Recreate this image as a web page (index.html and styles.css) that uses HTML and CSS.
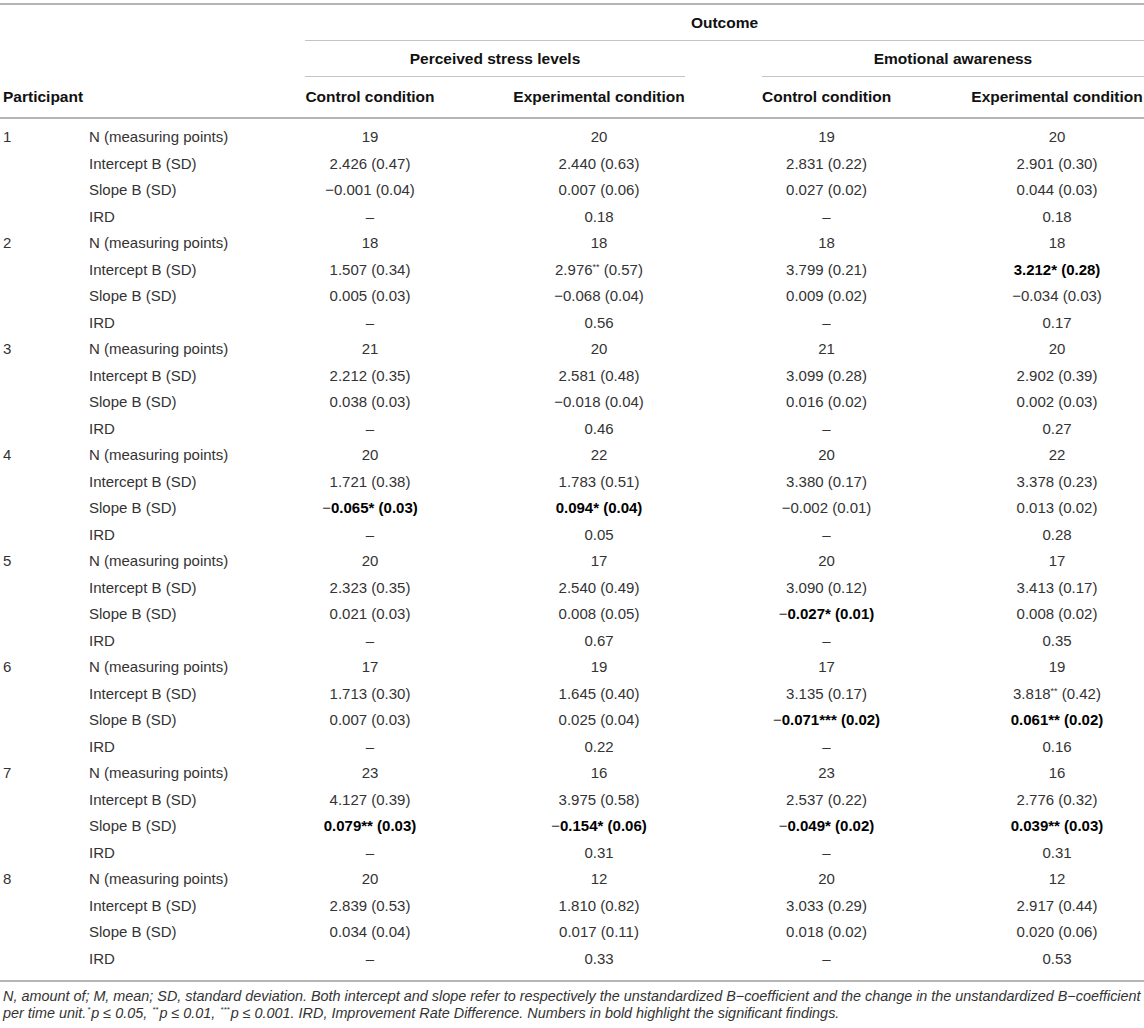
FILE: index.html
```html
<!DOCTYPE html>
<html>
    <head>
        <meta charset="utf-8">
        <title>Multilevel results per participant</title>
        <link rel="stylesheet" href="styles.css">
    </head>
    <body>
        <div class="page">
            <table class="results">
                <colgroup>
                    <col class="w-part">
                    <col class="w-label">
                    <col class="w-c1">
                    <col class="w-c2">
                    <col class="w-c3">
                    <col class="w-c4">
                </colgroup>
                <thead>
                    <tr>
                        <th colspan="2"></th>
                        <th colspan="4"><div class="rule">Outcome</div></th>
                    </tr>
                    <tr>
                        <th colspan="2"></th>
                        <th colspan="2" class="group-left"><div class="rule">Perceived stress levels</div></th>
                        <th colspan="2"><div class="rule">Emotional awareness</div></th>
                    </tr>
                    <tr class="cols">
                        <th colspan="2" class="part">Participant</th>
                        <th class="c1">Control condition</th>
                        <th class="c2">Experimental condition</th>
                        <th class="c3">Control condition</th>
                        <th class="c4">Experimental condition</th>
                    </tr>
                </thead>
                <tbody>
                    <tr><td>1</td><td>N (measuring points)</td><td>19</td><td>20</td><td>19</td><td>20</td></tr>
                    <tr><td></td><td>Intercept B (SD)</td><td>2.426 (0.47)</td><td>2.440 (0.63)</td><td>2.831 (0.22)</td><td>2.901 (0.30)</td></tr>
                    <tr><td></td><td>Slope B (SD)</td><td>−0.001 (0.04)</td><td>0.007 (0.06)</td><td>0.027 (0.02)</td><td>0.044 (0.03)</td></tr>
                    <tr><td></td><td>IRD</td><td>–</td><td>0.18</td><td>–</td><td>0.18</td></tr>

                    <tr><td>2</td><td>N (measuring points)</td><td>18</td><td>18</td><td>18</td><td>18</td></tr>
                    <tr><td></td><td>Intercept B (SD)</td><td>1.507 (0.34)</td><td>2.976<sup>**</sup> (0.57)</td><td>3.799 (0.21)</td><td><b>3.212* (0.28)</b></td></tr>
                    <tr><td></td><td>Slope B (SD)</td><td>0.005 (0.03)</td><td>−0.068 (0.04)</td><td>0.009 (0.02)</td><td>−0.034 (0.03)</td></tr>
                    <tr><td></td><td>IRD</td><td>–</td><td>0.56</td><td>–</td><td>0.17</td></tr>

                    <tr><td>3</td><td>N (measuring points)</td><td>21</td><td>20</td><td>21</td><td>20</td></tr>
                    <tr><td></td><td>Intercept B (SD)</td><td>2.212 (0.35)</td><td>2.581 (0.48)</td><td>3.099 (0.28)</td><td>2.902 (0.39)</td></tr>
                    <tr><td></td><td>Slope B (SD)</td><td>0.038 (0.03)</td><td>−0.018 (0.04)</td><td>0.016 (0.02)</td><td>0.002 (0.03)</td></tr>
                    <tr><td></td><td>IRD</td><td>–</td><td>0.46</td><td>–</td><td>0.27</td></tr>

                    <tr><td>4</td><td>N (measuring points)</td><td>20</td><td>22</td><td>20</td><td>22</td></tr>
                    <tr><td></td><td>Intercept B (SD)</td><td>1.721 (0.38)</td><td>1.783 (0.51)</td><td>3.380 (0.17)</td><td>3.378 (0.23)</td></tr>
                    <tr><td></td><td>Slope B (SD)</td><td>−<b>0.065* (0.03)</b></td><td><b>0.094* (0.04)</b></td><td>−0.002 (0.01)</td><td>0.013 (0.02)</td></tr>
                    <tr><td></td><td>IRD</td><td>–</td><td>0.05</td><td>–</td><td>0.28</td></tr>

                    <tr><td>5</td><td>N (measuring points)</td><td>20</td><td>17</td><td>20</td><td>17</td></tr>
                    <tr><td></td><td>Intercept B (SD)</td><td>2.323 (0.35)</td><td>2.540 (0.49)</td><td>3.090 (0.12)</td><td>3.413 (0.17)</td></tr>
                    <tr><td></td><td>Slope B (SD)</td><td>0.021 (0.03)</td><td>0.008 (0.05)</td><td>−<b>0.027* (0.01)</b></td><td>0.008 (0.02)</td></tr>
                    <tr><td></td><td>IRD</td><td>–</td><td>0.67</td><td>–</td><td>0.35</td></tr>

                    <tr><td>6</td><td>N (measuring points)</td><td>17</td><td>19</td><td>17</td><td>19</td></tr>
                    <tr><td></td><td>Intercept B (SD)</td><td>1.713 (0.30)</td><td>1.645 (0.40)</td><td>3.135 (0.17)</td><td>3.818<sup>**</sup> (0.42)</td></tr>
                    <tr><td></td><td>Slope B (SD)</td><td>0.007 (0.03)</td><td>0.025 (0.04)</td><td>−<b>0.071*** (0.02)</b></td><td><b>0.061** (0.02)</b></td></tr>
                    <tr><td></td><td>IRD</td><td>–</td><td>0.22</td><td>–</td><td>0.16</td></tr>

                    <tr><td>7</td><td>N (measuring points)</td><td>23</td><td>16</td><td>23</td><td>16</td></tr>
                    <tr><td></td><td>Intercept B (SD)</td><td>4.127 (0.39)</td><td>3.975 (0.58)</td><td>2.537 (0.22)</td><td>2.776 (0.32)</td></tr>
                    <tr><td></td><td>Slope B (SD)</td><td><b>0.079** (0.03)</b></td><td>−<b>0.154* (0.06)</b></td><td>−<b>0.049* (0.02)</b></td><td><b>0.039** (0.03)</b></td></tr>
                    <tr><td></td><td>IRD</td><td>–</td><td>0.31</td><td>–</td><td>0.31</td></tr>

                    <tr><td>8</td><td>N (measuring points)</td><td>20</td><td>12</td><td>20</td><td>12</td></tr>
                    <tr><td></td><td>Intercept B (SD)</td><td>2.839 (0.53)</td><td>1.810 (0.82)</td><td>3.033 (0.29)</td><td>2.917 (0.44)</td></tr>
                    <tr><td></td><td>Slope B (SD)</td><td>0.034 (0.04)</td><td>0.017 (0.11)</td><td>0.018 (0.02)</td><td>0.020 (0.06)</td></tr>
                    <tr><td></td><td>IRD</td><td>–</td><td>0.33</td><td>–</td><td>0.53</td></tr>
                </tbody>
            </table>
            <p class="note">N, amount of; M, mean; SD, standard deviation. Both intercept and slope refer to respectively the unstandardized B−coefficient and the change in the unstandardized B−coefficient<br>per time unit.<sup>*</sup>p ≤ 0.05, <sup>**</sup>p ≤ 0.01, <sup>***</sup>p ≤ 0.001. IRD, Improvement Rate Difference. Numbers in bold highlight the significant findings.</p>
        </div>
    </body>
</html>
```

FILE: styles.css
```css
body {
    margin: 0;
    background: #fff;
    color: #333;
    font-family: "Liberation Sans", Arial, sans-serif;
}

.page {
    padding-top: 3px;
}

.results {
    width: 1144px;
    table-layout: fixed;
    border-collapse: separate;
    border-spacing: 0;
    border-top: 2px solid #b5b5b5;
    border-bottom: 2px solid #b5b5b5;
}

.w-part  { width: 89px; }
.w-label { width: 216px; }
.w-c1    { width: 208px; }
.w-c2    { width: 249px; }
.w-c3    { width: 208px; }
.w-c4    { width: 174px; }

.results th {
    padding: 0;
    font-size: 15.5px;
    font-weight: bold;
    color: #111;
    text-align: center;
    white-space: nowrap;
}

.rule {
    height: 35px;
    line-height: 35px;
    border-bottom: 1px solid #c4c4c4;
}

.results th.group-left {
    padding-right: 77px;
}

.cols th {
    height: 40px;
    border-bottom: 2px solid #b5b5b5;
}

.cols th.part {
    text-align: left;
    padding-left: 3px;
}

.results td {
    padding: 0;
    font-size: 15px;
    line-height: 26.5px;
    text-align: center;
    white-space: nowrap;
}

.results td:nth-child(1) {
    text-align: left;
    padding-left: 3px;
}

.results td:nth-child(2) {
    text-align: left;
}

.results .c1, .results td:nth-child(3) { padding-right: 78px; }
.results .c2, .results td:nth-child(4) { padding-right: 77px; }
.results .c3, .results td:nth-child(5) { padding-right: 79px; }

.results tbody tr:first-child td {
    padding-top: 5px;
}

.results tbody tr:last-child td {
    padding-bottom: 8px;
}

.results b {
    color: #000;
}

.results sup {
    font-size: 9px;
    vertical-align: 5px;
    line-height: 0;
}

.note {
    margin: 6px 3px 0;
    font-size: 14.4px;
    line-height: 17px;
    font-style: italic;
    color: #333;
    white-space: nowrap;
}

.note sup {
    font-size: 8px;
    vertical-align: 6px;
    line-height: 0;
    padding: 0 1px;
}
```
